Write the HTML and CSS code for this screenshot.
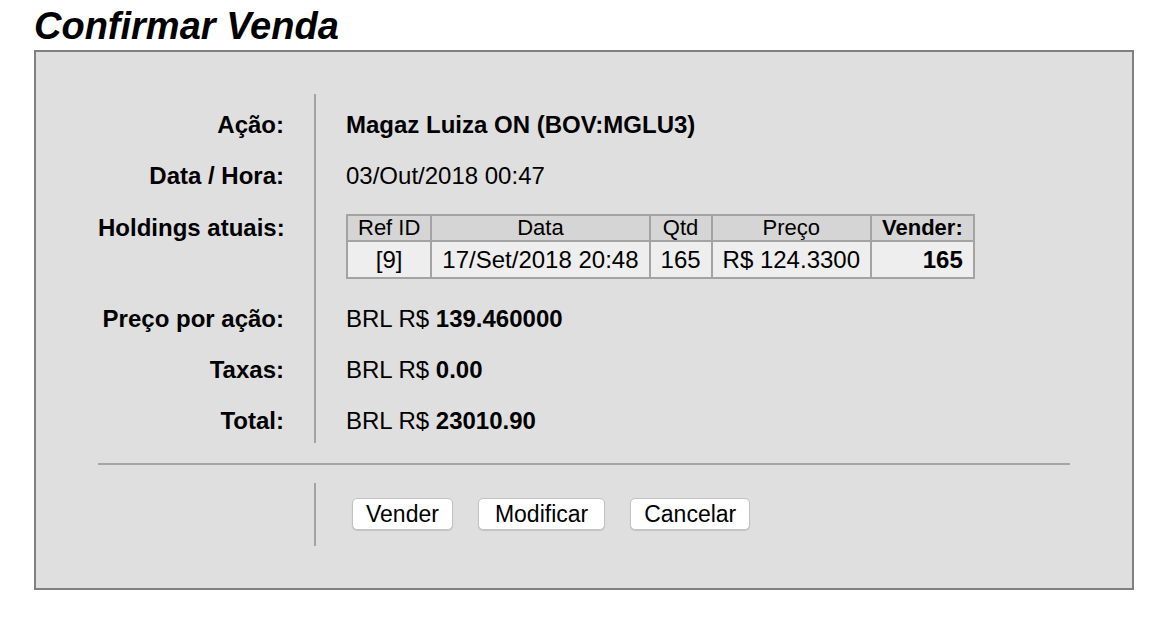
FILE: index.html
```html
<!DOCTYPE html>
<html lang="pt">
<head>
<meta charset="utf-8">
<title>Confirmar Venda</title>
<link rel="stylesheet" href="styles.css">
</head>
<body>
<h1 class="title">Confirmar Venda</h1>
<div class="panel">
  <div class="details">
    <div class="label cell-first">Ação:</div>
    <div class="value cell-first strong">Magaz Luiza ON (BOV:MGLU3)</div>

    <div class="label">Data / Hora:</div>
    <div class="value">03/Out/2018 00:47</div>

    <div class="label cell-table">Holdings atuais:</div>
    <div class="value cell-table">
      <table class="holdings">
        <thead>
          <tr><th>Ref ID</th><th>Data</th><th>Qtd</th><th>Preço</th><th class="sell-head">Vender:</th></tr>
        </thead>
        <tbody>
          <tr><td>[9]</td><td>17/Set/2018 20:48</td><td>165</td><td>R$ 124.3300</td><td class="sell-qty">165</td></tr>
        </tbody>
      </table>
    </div>

    <div class="label">Preço por ação:</div>
    <div class="value">BRL R$ <b>139.460000</b></div>

    <div class="label">Taxas:</div>
    <div class="value">BRL R$ <b>0.00</b></div>

    <div class="label cell-last">Total:</div>
    <div class="value cell-last">BRL R$ <b>23010.90</b></div>
  </div>
  <div class="divider"></div>
  <div class="actions">
    <div class="actions-spacer"></div>
    <div class="actions-buttons">
      <button class="btn">Vender</button>
      <button class="btn btn-wide">Modificar</button>
      <button class="btn">Cancelar</button>
    </div>
  </div>
</div>
</body>
</html>
```
FILE: styles.css
```css
html, body {
  margin: 0;
  background: #ffffff;
}

body {
  padding: 6px 34px 0;
  font-family: "Liberation Sans", Arial, Helvetica, sans-serif;
  color: #000;
}

.title {
  margin: 0 0 4px;
  font-size: 38px;
  line-height: 40px;
  font-weight: bold;
  font-style: italic;
}

.panel {
  width: 1100px;
  box-sizing: border-box;
  background: #dfdfdf;
  border: 2px solid #808080;
  padding: 42px 62px;
}

.details {
  display: grid;
  grid-template-columns: 216px 1fr;
  font-size: 24px;
  line-height: 27px;
}

.label {
  font-weight: bold;
  text-align: right;
  white-space: nowrap;
  padding: 12px 30px 12px 0;
}

.value {
  border-left: 2px solid #a3a3a3;
  padding: 12px 0 12px 30px;
}

.strong {
  font-weight: bold;
}

.cell-first {
  padding-top: 17px;
}

.cell-table {
  padding-top: 13px;
  padding-bottom: 14px;
}

.cell-last {
  padding-bottom: 9px;
}

.holdings {
  border-collapse: collapse;
  border: 2px solid #a3a3a3;
}

.holdings th,
.holdings td {
  border: 2px solid #a3a3a3;
  padding: 0 10px;
  text-align: center;
  white-space: nowrap;
}

.holdings th {
  background: #d5d5d5;
  font-size: 22px;
  font-weight: normal;
  line-height: 24px;
}

.holdings td {
  background: #eeeeee;
  font-size: 24px;
  line-height: 27px;
  padding-top: 4px;
  padding-bottom: 4px;
}

.holdings th.sell-head {
  font-weight: bold;
}

.holdings td.sell-qty {
  font-weight: bold;
  text-align: right;
}

.divider {
  height: 2px;
  background: #a5a5a5;
  margin: 20px 0 18px;
}

.actions {
  display: grid;
  grid-template-columns: 216px 1fr;
}

.actions-buttons {
  border-left: 2px solid #a3a3a3;
  padding: 15px 0 16px 36px;
  display: flex;
  gap: 25px;
}

.btn {
  height: 32px;
  padding: 0 13px;
  font-family: "Liberation Sans", Arial, Helvetica, sans-serif;
  font-size: 23px;
  line-height: 30px;
  color: #000;
  background: #ffffff;
  border: 1px solid #c2c2c2;
  border-radius: 5px;
  box-shadow: 0 1px 1px rgba(0, 0, 0, 0.12);
}

.btn-wide {
  padding: 0 16px;
}
```
